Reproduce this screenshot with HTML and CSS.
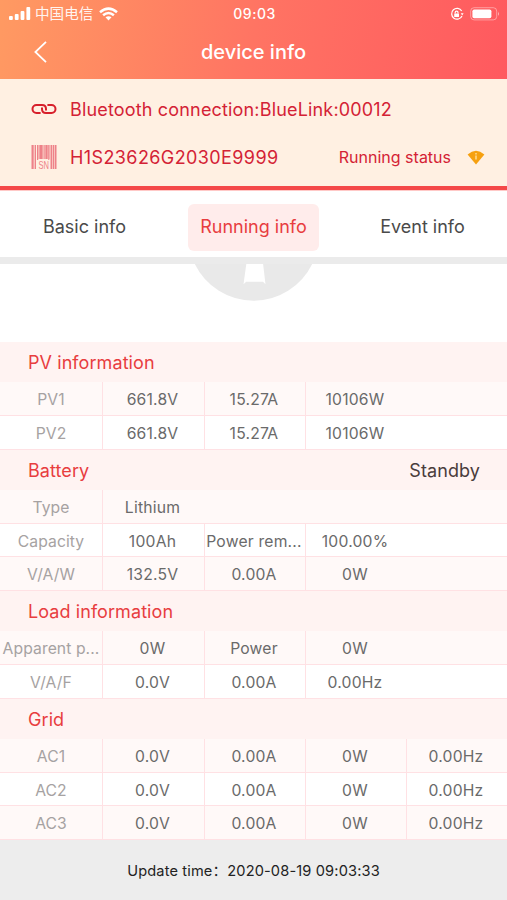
FILE: index.html
```html
<!DOCTYPE html>
<html lang="en">
<head>
<meta charset="utf-8">
<title>device info</title>
<link rel="stylesheet" href="styles.css">
</head>
<body>
<header class="header">
  <div class="status">
    <div class="carrier">
      <svg width="22" height="14" viewBox="0 0 22 14" fill="#fff"><rect x="0" y="9" width="3.8" height="4" rx="1"/><rect x="5.8" y="7" width="3.8" height="6" rx="1"/><rect x="11.6" y="4" width="3.8" height="9" rx="1"/><rect x="17.4" y="0" width="3.8" height="13" rx="1"/></svg>
      <span class="carrier-name">中国电信</span>
      <svg class="wifi" width="19" height="14" viewBox="0 0 19 14" fill="none" stroke="#fff" stroke-width="2.5"><path d="M1 5.2Q9.5-2 18 5.2M4.1 8.3Q9.5 3.8 14.9 8.3"/><path d="M9.5 13.4 6.5 10.3Q9.5 8 12.5 10.3Z" fill="#fff" stroke="none"/></svg>
    </div>
    <time class="clock">09:03</time>
    <div class="power">
      <svg width="14" height="14" viewBox="0 0 14 14" fill="none" stroke="#fff" stroke-width="1.2"><path d="M11.7 4A5.4 5.4 0 1 0 12 9"/><path d="M10.8 6.2h2.8L12.2 8.6Z" fill="#fff" stroke="none"/><rect x="4.2" y="6.4" width="4.8" height="3.6" rx=".5" fill="#fff" stroke="none"/><path d="M5.2 6.5V5.6a1.4 1.4 0 0 1 2.8 0v.9"/></svg>
      <svg width="30" height="14" viewBox="0 0 30 14"><rect x=".7" y=".7" width="26" height="12.2" rx="3.4" fill="none" stroke="#fff" stroke-opacity=".4"/><rect x="2.4" y="2.4" width="19" height="8.8" rx="1.8" fill="#fff"/><path d="M28 4.6q1.8 2.2 0 4.4Z" fill="#fff" fill-opacity=".6"/></svg>
    </div>
  </div>
  <div class="nav">
    <svg class="back" width="13" height="22" viewBox="0 0 13 22" fill="none" stroke="#fff" stroke-width="1.8"><path d="M12 .8 1.4 11 12 21.2"/></svg>
    <h1 class="title">device info</h1>
  </div>
</header>

<section class="connection">
  <div class="line">
    <svg class="line-icon" width="26" height="12" viewBox="0 0 26 12" fill="none" stroke="#d71f2b" stroke-width="2"><path d="M9.6 10H5.500A4 4 0 0 1 5.500 2H11Q15 2 15 6V7.500"/><path d="M16.400 2H20.500A4 4 0 0 1 20.500 10H15Q11 10 11 6V4.500"/></svg>
    <span class="bluetooth">Bluetooth connection:BlueLink:00012</span>
  </div>
  <div class="line">
    <svg class="line-icon" width="26" height="26" viewBox="0 0 26 26" fill="#ee8289"><path d="M.5 1h2v24h-2ZM4 1h1v24H4ZM6 1h1.200v15H6ZM8.500 1h3v14h-3ZM12.500 1h1v14h-1ZM14.500 1h2v14h-2ZM17.300 1h1v15h-1ZM19.500 1h1.500v24h-1.500ZM22 1h1v24h-1ZM24 1h1.500v24H24Z"/><path d="M2 1h2v24H2ZM6 1h6v14H6ZM13 1h6v14h-6ZM21 1h3v24h-3Z" opacity=".4"/><text class="sn" x="7.500" y="25" textLength="10.500" lengthAdjust="spacingAndGlyphs">SN</text></svg>
    <span class="serial">H1S23626G2030E9999</span>
    <span class="running">Running status</span>
    <svg class="gem" width="18" height="15" viewBox="0 0 18 15"><path d="M.6 4.400Q9-3 17.400 4.400L9 14.600Z" fill="#f6a00f"/><path d="M9 3v1.500M9 5.500v4" stroke="#ffe3a8" stroke-width="1.300"/></svg>
  </div>
</section>

<nav class="tabs">
  <span class="tab">Basic info</span>
  <span class="tab tab-active">Running info</span>
  <span class="tab">Event info</span>
</nav>

<main>
  <div class="emblem">
    <svg width="127" height="37" viewBox="0 0 127 37"><path d="M4.800 0A65.300 65.300 0 0 0 122.200 0Z" fill="#e9e9e9"/><path d="M56.300 0H73.100L75.500 20.300 73 17.700H56.200L53.500 20.300Z" fill="#fff"/></svg>
  </div>

  <section class="group">
    <h2 class="group-head">PV information</h2>
    <div class="row"><span>PV1</span><span>661.8V</span><span>15.27A</span><span>10106W</span></div>
    <div class="row"><span>PV2</span><span>661.8V</span><span>15.27A</span><span>10106W</span></div>
  </section>
  <section class="group">
    <h2 class="group-head">Battery<span class="state">Standby</span></h2>
    <div class="row"><span>Type</span><span>Lithium</span></div>
    <div class="row"><span>Capacity</span><span>100Ah</span><span>Power rem...</span><span>100.00%</span></div>
    <div class="row"><span>V/A/W</span><span>132.5V</span><span>0.00A</span><span>0W</span></div>
  </section>
  <section class="group">
    <h2 class="group-head">Load information</h2>
    <div class="row"><span>Apparent p...</span><span>0W</span><span>Power</span><span>0W</span></div>
    <div class="row"><span>V/A/F</span><span>0.0V</span><span>0.00A</span><span>0.00Hz</span></div>
  </section>
  <section class="group">
    <h2 class="group-head">Grid</h2>
    <div class="row"><span>AC1</span><span>0.0V</span><span>0.00A</span><span>0W</span><span>0.00Hz</span></div>
    <div class="row"><span>AC2</span><span>0.0V</span><span>0.00A</span><span>0W</span><span>0.00Hz</span></div>
    <div class="row"><span>AC3</span><span>0.0V</span><span>0.00A</span><span>0W</span><span>0.00Hz</span></div>
  </section>
</main>

<footer class="footer">Update time：2020-08-19 09:03:33</footer>
</body>
</html>
```

FILE: styles.css
```css
* { box-sizing: border-box; }
body {
  margin: 0;
  height: 900px;
  overflow: hidden;
  display: flex;
  flex-direction: column;
  background: #fff;
  color: #4a4a4a;
  font-family: Inter, "Noto Sans CJK SC", sans-serif;
}
svg { display: block; flex: none; }
h1, h2 { margin: 0; font-weight: 400; }
span, time, h1, h2 { white-space: nowrap; }

.header {
  height: 79px;
  flex: none;
  color: #fff;
  background: linear-gradient(100deg, #ff9a62 0%, #ff7463 50%, #ff595f 100%);
}
.status {
  height: 27px;
  display: grid;
  grid-template-columns: 1fr auto 1fr;
  align-items: center;
  padding: 0 7px 0 9px;
}
.carrier { display: flex; align-items: center; }
.carrier-name { font-size: 14.6px; line-height: 20px; margin: 0 6px 0 4px; opacity: .9; }
.clock { font-size: 14px; font-weight: 500; letter-spacing: .5px; }
.power { display: flex; justify-content: flex-end; align-items: center; gap: 6px; }
.nav { height: 50px; display: grid; grid-template-columns: 1fr auto 1fr; align-items: center; padding: 0 34px; }
.title { font-size: 20px; font-weight: 500; line-height: 26px; }

.connection {
  height: 112px;
  flex: none;
  padding: 6px 22px 0 31px;
  background: #fff0e2;
  border-bottom: 1px solid #ffc9c7;
  box-shadow: inset 0 -4px #f44848;
  color: #d42235;
}
.line { height: 48px; display: flex; align-items: center; }
.line-icon { margin-right: 13px; }
.bluetooth, .serial { font-size: 18px; }
.bluetooth { letter-spacing: .17px; }
.serial { letter-spacing: .4px; }
.sn { font: 11px "Liberation Sans", sans-serif; fill: #ee8289; }
.running { font-size: 16px; margin-left: auto; }
.gem { margin-left: 16px; }

.tabs {
  height: 73px;
  flex: none;
  display: grid;
  grid-template-columns: repeat(3, 1fr);
  justify-items: center;
  align-items: center;
  border-bottom: 7px solid #ebebeb;
  padding: 6px 0 0;
}
.tab { height: 47px; line-height: 46px; padding: 0 12px; border-radius: 6px; font-size: 18px; }
.tab-active { background: #ffeceb; color: #e83d3f; }

.emblem { height: 78px; display: flex; justify-content: center; align-items: flex-start; }

.group-head {
  height: 40.25px;
  padding: 1px 27px 0 28px;
  display: flex;
  justify-content: space-between;
  align-items: center;
  background: #fff3f2;
  color: #e83d3f;
  font-size: 18px;
  letter-spacing: .08px;
}
.state { color: #4a3c3c; }
.row {
  height: 33.7px;
  display: grid;
  grid-template-columns: 102px 102px 101px 101px 1fr;
  border-bottom: 1px solid #ffe1e4;
  color: #6a6a6a;
  font-size: 15.7px;
  line-height: 36px;
  text-align: center;
}
.row:nth-child(odd) { background: #fff; }
.row:nth-child(even) { background: #fff9f8; }
.row > span { height: 33px; }
.row > span + span { border-left: 1px solid #ffe1e4; padding-right: 2px; letter-spacing: .2px; }
.row > span:first-child { color: #a6a2a2; letter-spacing: .08px; }

.footer {
  flex: 1;
  display: flex;
  align-items: center;
  justify-content: center;
  background: #ededed;
  color: #222;
  font-size: 14.6px;
  letter-spacing: .14px;
}
```
